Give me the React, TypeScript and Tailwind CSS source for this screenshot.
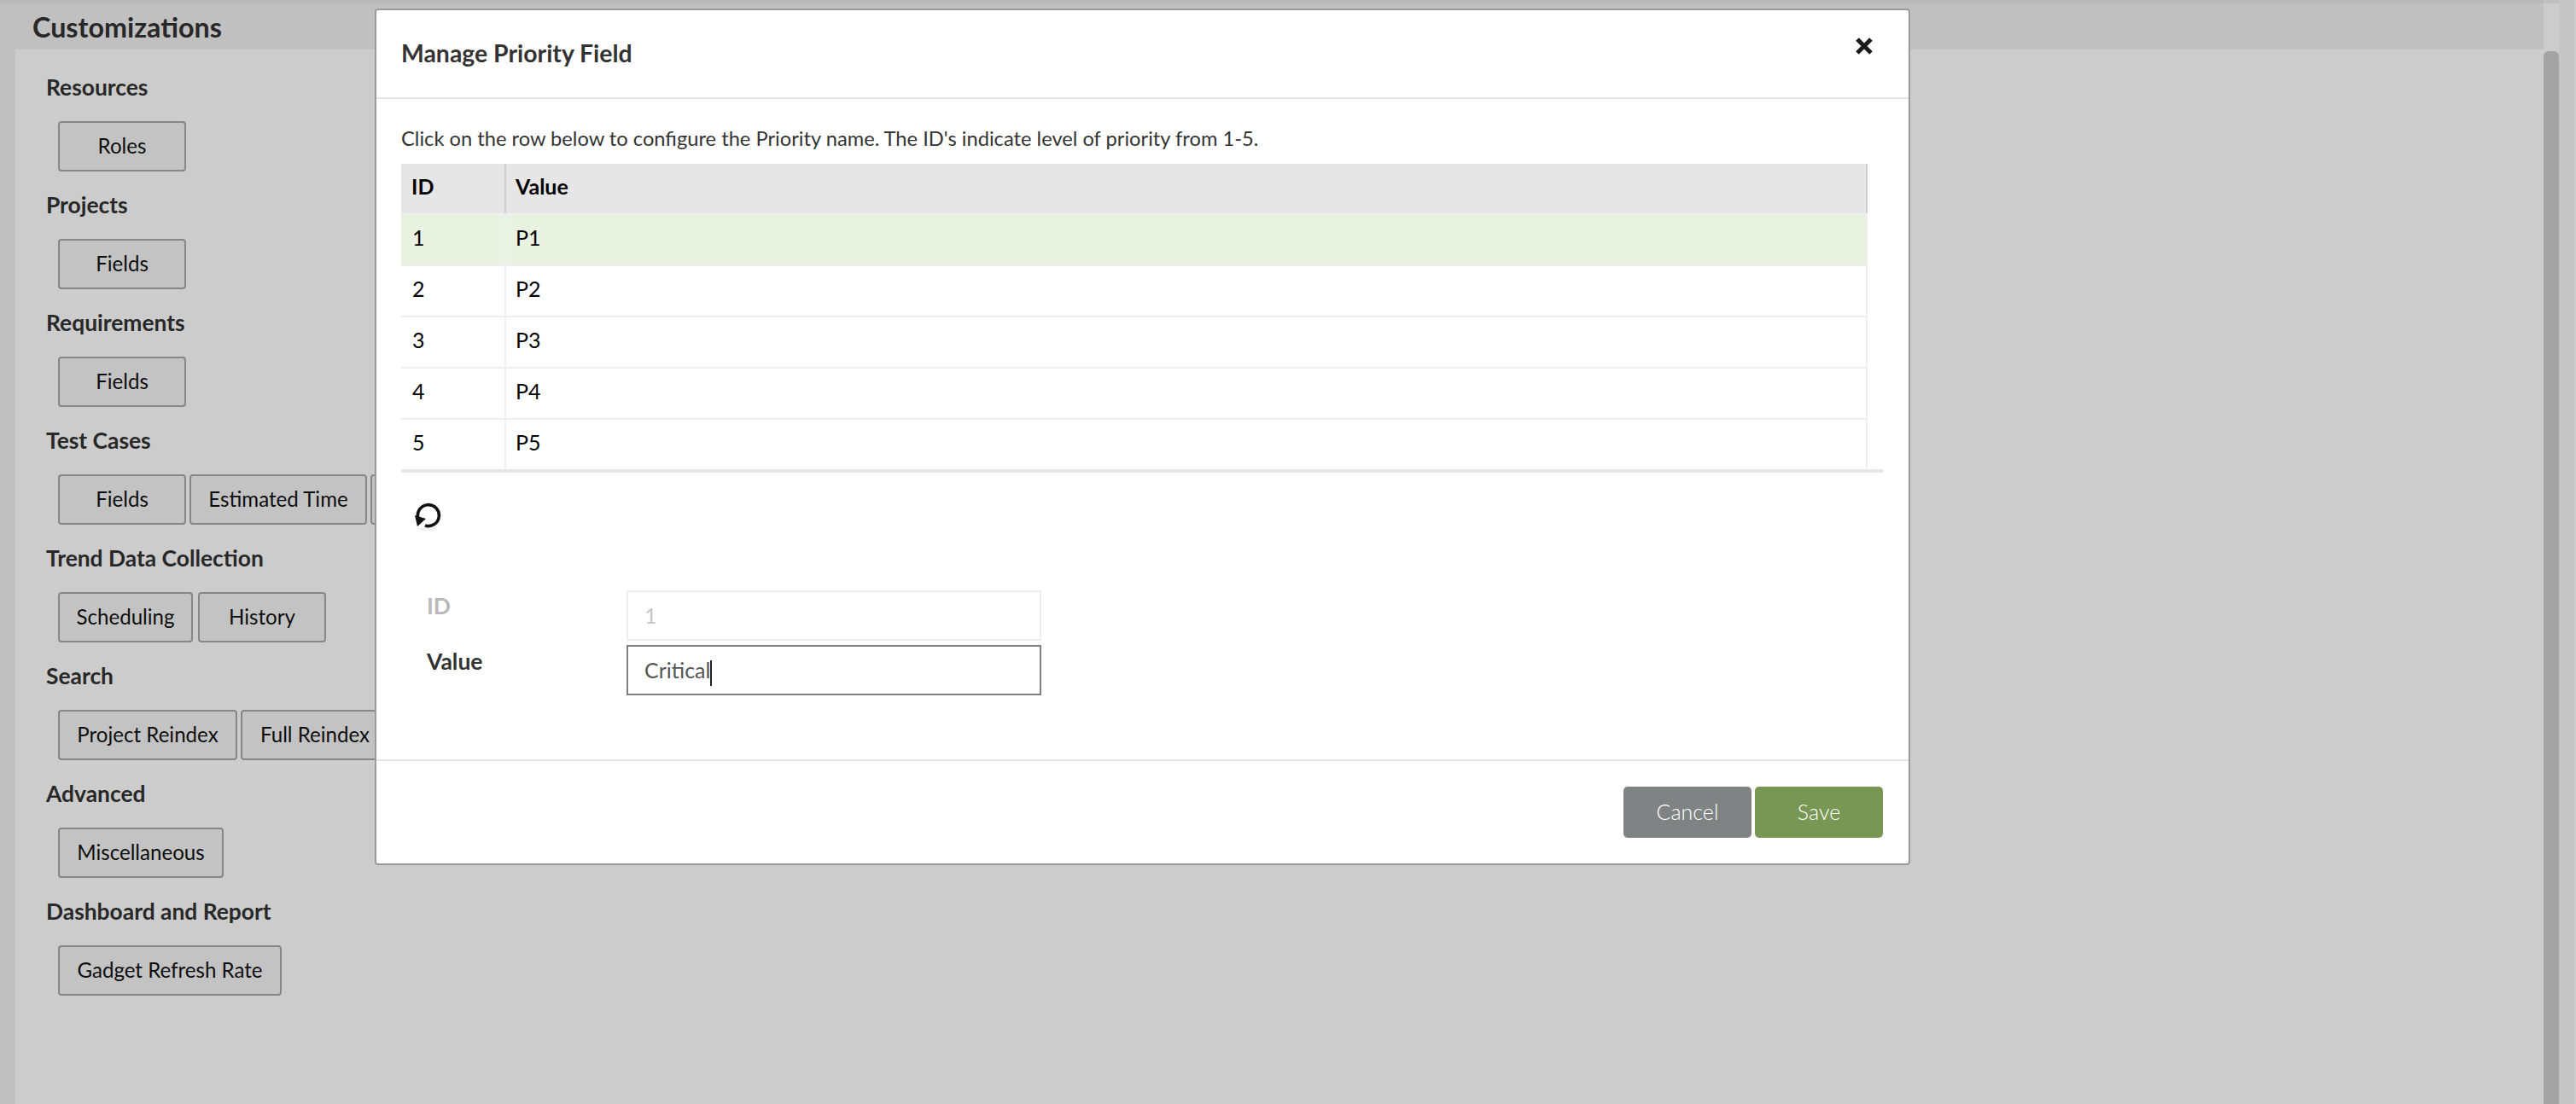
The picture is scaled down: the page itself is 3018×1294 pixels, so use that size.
import React from "react";

const sections = [
  { title: "Resources", buttons: [{ label: "Roles", width: "w-[150px]" }] },
  { title: "Projects", buttons: [{ label: "Fields", width: "w-[150px]" }] },
  { title: "Requirements", buttons: [{ label: "Fields", width: "w-[150px]" }] },
  {
    title: "Test Cases",
    buttons: [
      { label: "Fields", width: "w-[150px]" },
      { label: "Estimated Time", width: "w-[208px]" },
      { label: "", width: "w-[150px]" },
    ],
  },
  {
    title: "Trend Data Collection",
    buttons: [
      { label: "Scheduling", width: "w-[158px]" },
      { label: "History", width: "w-[150px] ml-[2px]" },
    ],
  },
  {
    title: "Search",
    buttons: [
      { label: "Project Reindex", width: "w-[210px]" },
      { label: "Full Reindex", width: "w-[174px]" },
    ],
  },
  { title: "Advanced", buttons: [{ label: "Miscellaneous", width: "w-[194px]" }] },
  { title: "Dashboard and Report", buttons: [{ label: "Gadget Refresh Rate", width: "w-[262px]" }] },
];

const rows = [
  { id: 1, value: "P1" },
  { id: 2, value: "P2" },
  { id: 3, value: "P3" },
  { id: 4, value: "P4" },
  { id: 5, value: "P5" },
];

function RefreshIcon() {
  return (
    <svg width="32" height="36" viewBox="0 0 32 36" className="block">
      <ellipse cx="15" cy="32" rx="12" ry="2" fill="#f0f0f0" />
      <path d="M4 20 A12.5 12.5 0 1 1 12 28" fill="none" stroke="#111" strokeWidth="3.6" />
      <path d="M0 16 L13 20 L3 29 Z" fill="#111" />
    </svg>
  );
}

function Modal() {
  return (
    <div className="absolute left-[439px] top-[10px] w-[1799px] h-[1004px] bg-white border-2 border-[#9a9a9a] rounded-[4px]">
      <div className="h-[104px] border-b-2 border-[#e6e6e6] pl-[29px] pr-[41px] flex justify-between">
        <h2 className="self-center text-[28.4px] font-bold text-[#333] mt-[-2px]">Manage Priority Field</h2>
        <svg width="22" height="22" viewBox="0 0 22 22" className="mt-[31px]">
          <path d="M3 3 L19 19 M19 3 L3 19" stroke="#1a1a1a" strokeWidth="5" />
        </svg>
      </div>

      <div className="h-[774px] pl-[29px] pt-[28px]">
        <p className="h-[38px] mb-[10px] text-[23.7px] leading-[36px] text-[#333]">
          Click on the row below to configure the Priority name. The ID's indicate level of priority from 1-5.
        </p>
        <div className="w-[1718px] text-[25px] text-black">
          <div className="flex h-[60px] bg-[#e6e6e6] border-b-2 border-[#eeeeee] font-bold">
            <div className="w-[123px] pl-[12px] border-r-2 border-[#cfcfcf] leading-[53px]">ID</div>
            <div className="flex-1 pl-[11px] border-r-2 border-[#cfcfcf] leading-[53px]">Value</div>
          </div>
          {rows.map((row) => (
            <div
              key={row.id}
              className={
                row.id === 1
                  ? "flex h-[60px] bg-[#e9f1e0] border-b-2 border-[#eeeeee]"
                  : row.id === 5
                    ? "flex h-[58px]"
                    : "flex h-[60px] border-b-2 border-[#eeeeee]"
              }
            >
              <div className="w-[123px] pl-[13px] border-r-2 border-[#eeeeee] leading-[53px]">{row.id}</div>
              <div className="flex-1 pl-[11px] border-r-2 border-[#eeeeee] leading-[53px]">{row.value}</div>
            </div>
          ))}
        </div>
        <div className="w-[1736px] h-[4px] bg-[#e6e6e6]" />

        <div className="ml-[16px] mt-[34px]">
          <RefreshIcon />
        </div>

        <div className="mt-[68px] flex flex-col gap-[5px]">
          <div className="flex h-[59px]">
            <label className="w-[264px] pl-[30px] text-[26.5px] font-bold text-[#b9b9b9] leading-[36px]">ID</label>
            <div className="w-[486px] border-2 border-[#eeeeee] pl-[19px] text-[25px] leading-[55px] text-[#c8c8c8]">1</div>
          </div>
          <div className="flex h-[59px]">
            <label className="w-[264px] pl-[30px] text-[26.5px] font-bold text-[#333] leading-[38px]">Value</label>
            <div className="w-[486px] border-2 border-[#808080] pl-[19px] text-[25px] leading-[55px] text-[#555]">
              Critical
              <span className="inline-block w-[2px] h-[30px] bg-[#222] align-middle" />
            </div>
          </div>
        </div>
      </div>

      <div className="border-t-2 border-[#e6e6e6] pt-[30px] pr-[30px] flex justify-end gap-[4px]">
        <button className="w-[150px] h-[60px] rounded-[5px] bg-[#808384] text-[25px] font-light text-white">Cancel</button>
        <button className="w-[150px] h-[60px] rounded-[5px] bg-[#789654] text-[25px] font-light text-white">Save</button>
      </div>
    </div>
  );
}

export default function App() {
  return (
    <div className="relative h-screen overflow-hidden flex bg-[#f1f1f1] font-['Lato',_sans-serif]">
      <div className="w-[2980px] flex flex-col">
        <div className="h-[58px] pl-[38px] text-[32.3px] font-bold text-[#333] leading-[64px] bg-gradient-to-b from-[#e2e2e2] to-[#f1f1f1] to-[6px]">
          Customizations
        </div>
        <div className="flex-1 ml-[18px] bg-white pl-[36px] pt-[26px]">
          {sections.map((section) => (
            <div key={section.title} className="pb-[21px]">
              <h3 className="h-[38px] mb-[20px] text-[26.4px] font-bold leading-[36px] text-[#333]">{section.title}</h3>
              <div className="flex gap-[4px] pl-[14px]">
                {section.buttons.map((button, i) => (
                  <button
                    key={i}
                    className={`${button.width} shrink-0 h-[59px] rounded-[4px] border-2 border-[#a9a9a9] bg-[#f4f4f4] text-[24.1px] text-[#111]`}
                  >
                    {button.label}
                  </button>
                ))}
              </div>
            </div>
          ))}
        </div>
      </div>

      {/* scrollbar */}
      <div className="w-[18px] mt-[4px] bg-white">
        <div className="mt-[56px] h-full bg-[#cccccc] rounded-t-[6px]" />
      </div>
      <div className="w-[18px] bg-[#f8f8f8]" />
      <div className="w-[2px] bg-white" />

      <div className="absolute inset-0 bg-black/20" />
      <Modal />
    </div>
  );
}
